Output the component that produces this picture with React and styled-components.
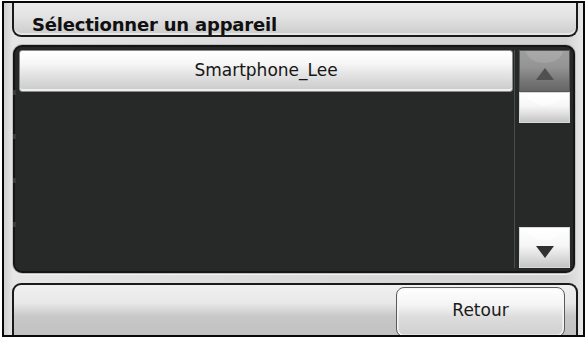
import React from "react";
import styled, { createGlobalStyle } from "styled-components";

const Global = createGlobalStyle`
  html, body { margin: 0; padding: 0; background: #ffffff; }
  body { font-family: "DejaVu Sans", Verdana, sans-serif; }
`;

const Frame = styled.div`
  box-sizing: border-box;
  margin: 1px 0 0 2px;
  width: 583px;
  height: 336px;
  border: 2px solid #080808;
  background: linear-gradient(90deg, #d0d0d0 0%, #e6e6e6 1.5%, #dadada 50%, #d2d2d2 97%, #e8e8e8 100%);
  display: flex;
  flex-direction: column;
  overflow: hidden;
`;

const Header = styled.div`
  box-sizing: border-box;
  margin: 0 5px 0 8px;
  height: 34px;
  flex: none;
  border: 2px solid #1a1a1a;
  border-top: none;
  border-radius: 0 0 9px 9px;
  background: linear-gradient(180deg, #ececec 0%, #e2e2e2 45%, #cbcbcb 100%);
  box-shadow: inset 0 -2px 0 rgba(255,255,255,0.5);
  display: flex;
  align-items: flex-end;
  padding: 0 0 0 18px;
`;

const Title = styled.span`
  font-family: "DejaVu Sans", Verdana, sans-serif;
  font-weight: bold;
  font-size: 18px;
  line-height: 20px;
  color: #101010;
  letter-spacing: -0.2px;
`;

const Panel = styled.div`
  box-sizing: border-box;
  margin: 8px 8px 0 9px;
  height: 228px;
  flex: none;
  border: 2px solid #151515;
  border-radius: 9px;
  background: #272929;
  box-shadow: 0 0 0 1px #bdbdbd, 0 1px 0 1px #f2f2f2;
  padding: 3px 3px 3px 4px;
  display: grid;
  grid-template-columns: 1fr 51px;
  column-gap: 4px;
`;

const List = styled.div`
  display: grid;
  grid-template-rows: 42px repeat(4, 1fr);
  border-right: 1px solid #4a4c4c;
`;

const Row = styled.div`
  position: relative;
  &::before {
    content: "";
    position: absolute;
    left: -6px;
    top: -2px;
    width: 3px;
    height: 5px;
    background: ${(p) => (p.mark ? "#3a3a3a" : "transparent")};
  }
`;

const Item = styled.div`
  box-sizing: border-box;
  height: 42px;
  margin-right: 1px;
  border-radius: 3px;
  border: 1px solid #8a8a8a;
  background: linear-gradient(180deg, #ffffff 0%, #f7f7f7 30%, #e6e6e6 55%, #c9c9c9 100%);
  box-shadow: inset 0 -2px 0 #efefef;
  display: flex;
  align-items: center;
  justify-content: center;
  font-family: "DejaVu Sans", Verdana, sans-serif;
  font-size: 17px;
  color: #161616;
  padding-bottom: 2px;
`;

const Scroll = styled.div`
  display: flex;
  flex-direction: column;
`;

const ScrollBtn = styled.div`
  box-sizing: border-box;
  height: ${(p) => p.h}px;
  flex: none;
  border: 1px solid ${(p) => (p.dark ? "#555" : "#d8d8d8")};
  background: ${(p) =>
    p.dark
      ? "linear-gradient(180deg, #9e9e9e 0%, #949494 40%, #767676 75%, #666666 100%)"
      : "linear-gradient(180deg, #ffffff 0%, #f6f6f6 45%, #dcdcdc 75%, #c4c4c4 100%)"};
  display: flex;
  align-items: center;
  justify-content: center;
  position: relative;
  overflow: hidden;
  &::after {
    content: "";
    position: absolute;
    left: 6px;
    right: 6px;
    top: -14px;
    height: 26px;
    border-radius: 0 0 50% 50%;
    background: ${(p) => (p.dark ? "rgba(255,255,255,0.12)" : "rgba(255,255,255,0.6)")};
  }
`;

const Track = styled.div`
  flex: 1;
`;

const Arrow = styled.svg`
  position: relative;
  z-index: 1;
  margin-top: ${(p) => p.mt || 0}px;
`;

const Bottom = styled.div`
  box-sizing: border-box;
  margin: 10px 5px 0 8px;
  flex: 1;
  border: 2px solid #1a1a1a;
  border-bottom: none;
  border-radius: 9px 9px 0 0;
  background: linear-gradient(180deg, #f0f0f0 0%, #e8e8e8 35%, #c8c8c8 60%, #c0c0c0 100%);
  display: flex;
  justify-content: flex-end;
  align-items: flex-start;
  padding: 2px 11px 0 0;
`;

const Button = styled.div`
  box-sizing: border-box;
  width: 169px;
  height: 50px;
  border: 1.5px solid #5a5a5a;
  border-radius: 8px;
  background: linear-gradient(180deg, #ffffff 0%, #f4f4f4 35%, #dddddd 60%, #cfcfcf 100%);
  box-shadow: inset 0 0 0 1.5px #f6f6f6;
  display: flex;
  justify-content: center;
  padding-top: 12px;
  font-family: "DejaVu Sans", Verdana, sans-serif;
  font-size: 17px;
  color: #1a1a1a;
`;

export default function App() {
  return (
    <>
      <Global />
      <Frame>
        <Header>
          <Title>Sélectionner un appareil</Title>
        </Header>
        <Panel>
          <List>
            <Row>
              <Item>Smartphone_Lee</Item>
            </Row>
            <Row mark />
            <Row mark />
            <Row mark />
            <Row mark />
          </List>
          <Scroll>
            <ScrollBtn dark h={42}>
              <Arrow width="18" height="12" viewBox="0 0 18 12" mt={6}>
                <polygon points="9,0 18,12 0,12" fill="#505050" />
              </Arrow>
            </ScrollBtn>
            <ScrollBtn h={31} />
            <Track />
            <ScrollBtn h={41}>
              <Arrow width="18" height="12" viewBox="0 0 18 12" mt={8}>
                <polygon points="0,0 18,0 9,12" fill="#303030" />
              </Arrow>
            </ScrollBtn>
          </Scroll>
        </Panel>
        <Bottom>
          <Button>Retour</Button>
        </Bottom>
      </Frame>
    </>
  );
}
